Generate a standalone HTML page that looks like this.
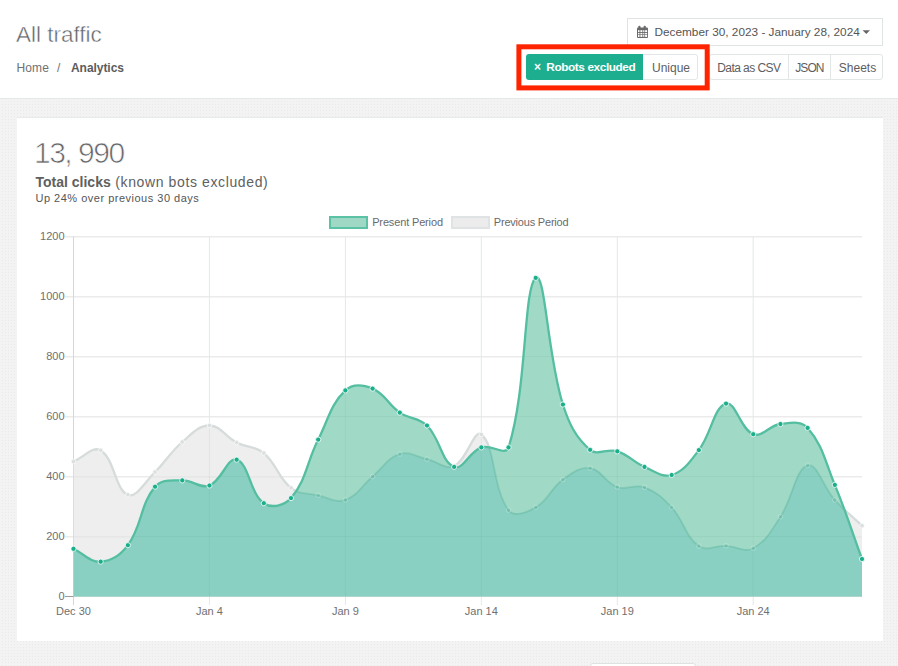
<!DOCTYPE html>
<html><head><meta charset="utf-8">
<style>
*{box-sizing:border-box;margin:0;padding:0}
html,body{width:898px;height:666px;overflow:hidden;background:#fff;font-family:"Liberation Sans",sans-serif;position:relative}
.hline{position:absolute;left:0;top:98px;width:898px;height:1px;background:#e4e7e7}
.bg{position:absolute;left:0;top:99px;width:898px;height:567px;background-color:#f3f3f3;background-image:linear-gradient(#f3f3f3 2px,transparent 2px),linear-gradient(90deg,#f3f3f3 2px,#eaeaea 2px);background-size:3px 3px}
.card{position:absolute;left:17px;top:117px;width:866px;height:524px;background:#fff;border-top:1px solid #e8ebeb}
.t{position:absolute;white-space:nowrap;line-height:1}
.title{left:16px;top:23.5px;font-size:22.5px;color:#606366;-webkit-text-stroke:0.45px #fff}
.date{position:absolute;left:627px;top:18px;width:256px;height:28px;border:1px solid #dfe3e3;background:#fff}
.btn{position:absolute;top:54px;height:26px;border:1px solid #e2e6e6;background:#fff}
.red{position:absolute;left:516.5px;top:44.3px;width:193.2px;height:46px;border:5px solid #fa2200}
.green{position:absolute;left:526px;top:54px;width:117px;height:26px;background:#1cae8f;border-radius:3px 0 0 3px}
.sep{position:absolute;top:55px;width:1px;height:24px;background:#e2e6e6}
.bt{font-size:12px;color:#5e5e5e;top:61.5px}
</style></head><body>
<div class="hline"></div>
<div class="bg"></div>
<div class="t title">All traffic</div>
<div class="t" style="left:16.5px;top:61.5px;font-size:12px;color:#707070;letter-spacing:0.1px">Home</div>
<div class="t" style="left:57px;top:61.5px;font-size:12px;color:#707070">/</div>
<div class="t" style="left:71px;top:61.5px;font-size:12px;color:#5c5c5c;font-weight:bold;letter-spacing:-0.05px">Analytics</div>
<div class="date"></div>
<svg style="position:absolute;left:0;top:0" width="898" height="100">
<rect x="637" y="27.5" width="11" height="10.5" rx="1" fill="#6a6a6a"/>
<rect x="638.3" y="25.8" width="2.2" height="3" rx="1" fill="#6a6a6a"/>
<rect x="643.6" y="25.8" width="2.2" height="3" rx="1" fill="#6a6a6a"/>
<g fill="#fff">
<rect x="638" y="30.2" width="1.5" height="1.8"/><rect x="640.4" y="30.2" width="2" height="1.8"/><rect x="643.2" y="30.2" width="1.2" height="1.8"/><rect x="645.1" y="30.2" width="2" height="1.8"/>
<rect x="638" y="32.9" width="1.5" height="1.4"/><rect x="640.4" y="32.9" width="2" height="1.4"/><rect x="643.2" y="32.9" width="1.2" height="1.4"/><rect x="645.1" y="32.9" width="2" height="1.4"/>
<rect x="638" y="34.9" width="1.5" height="2"/><rect x="640.4" y="34.9" width="2" height="2"/><rect x="643.2" y="34.9" width="1.2" height="2"/><rect x="645.1" y="34.9" width="2" height="2"/>
</g>
<path d="M862.6 30.3 L870 30.3 L866.3 34 Z" fill="#666"/>
</svg>
<div class="t" style="left:654.5px;top:26.5px;font-size:11.8px;color:#555">December 30, 2023 - January 28, 2024</div>
<div class="btn" style="left:642px;width:56px;border-radius:0 3px 3px 0"></div>
<div class="t bt" style="left:652px;">Unique</div>
<div class="green"></div>
<div class="t" style="left:534px;top:61px;font-size:12px;font-weight:bold;color:#f4fbf9">×</div>
<div class="t" style="left:546.3px;top:62px;font-size:11.8px;color:#fff;font-weight:bold;letter-spacing:-0.4px">Robots excluded</div>
<div class="btn" style="left:709px;width:174px;border-radius:3px"></div>
<div class="sep" style="left:788px"></div>
<div class="sep" style="left:830px"></div>
<div class="t bt" style="left:717.2px;letter-spacing:-0.55px">Data as CSV</div>
<div class="t bt" style="left:795.2px;letter-spacing:-0.9px">JSON</div>
<div class="t bt" style="left:838.8px">Sheets</div>
<svg style="position:absolute;left:0;top:0" width="898" height="100"><rect x="518.9" y="46.8" width="188.3" height="41.1" fill="none" stroke="#fe2400" stroke-width="5"/></svg>
<div class="card"></div>
<div style="position:absolute;left:590px;top:663px;width:106px;height:10px;background:#fff;border:1px solid #dde3e3;border-radius:3px"></div>
<div class="t" style="left:34px;top:138px;font-size:30px;color:#65676a;letter-spacing:-1.5px;-webkit-text-stroke:0.7px #fff">13, 990</div>
<div class="t" style="left:35.5px;top:174.5px;font-size:14px;color:#606060;letter-spacing:0.62px"><b style="letter-spacing:0">Total clicks</b> (known bots excluded)</div>
<div class="t" style="left:35.5px;top:193.3px;font-size:11px;color:#555;letter-spacing:0.5px">Up 24% over previous 30 days</div>
<div class="t" style="left:372.2px;top:217px;font-size:11px;color:#6a6a6a;letter-spacing:-0.15px">Present Period</div>
<div class="t" style="left:493.8px;top:217px;font-size:11px;color:#6a6a6a;letter-spacing:-0.2px">Previous Period</div>
<div style="position:absolute;left:329px;top:215.6px;width:39px;height:13.4px;background:#9fd9c6;border:2.5px solid #5cc2a6"></div>
<div style="position:absolute;left:450.6px;top:215.6px;width:39px;height:13.6px;background:#ececec;border:2.5px solid #dfe3e3"></div>
<svg width="898" height="666" viewBox="0 0 898 666" style="position:absolute;left:0;top:0">
<defs><clipPath id="cv"><path d="M73.50 461.50 C84.38 457.06 92.84 445.60 100.69 450.40 C114.60 458.92 114.94 489.66 127.88 494.80 C136.70 498.30 144.91 481.86 155.07 472.00 C166.66 460.74 170.08 452.42 182.26 442.00 C191.83 433.82 198.63 425.38 209.45 425.50 C220.38 425.62 225.23 436.81 236.64 442.60 C246.99 447.85 255.18 445.90 263.83 453.10 C276.93 464.02 277.74 477.57 291.02 487.90 C299.49 494.49 307.21 492.97 318.21 495.40 C328.96 497.77 335.95 503.18 345.40 499.90 C357.70 495.62 361.62 485.75 372.59 476.50 C383.37 467.39 387.58 457.90 399.78 454.00 C409.33 450.94 416.17 456.72 426.97 459.10 C437.92 461.52 445.40 469.96 454.16 466.00 C467.15 460.12 473.92 428.48 481.34 434.50 C495.67 446.12 492.30 488.34 508.53 510.10 C514.05 517.50 526.76 512.45 535.72 507.40 C548.51 500.21 550.53 488.45 562.91 479.50 C572.28 472.73 579.86 466.69 590.10 468.10 C601.61 469.69 605.35 482.78 617.29 487.00 C627.10 490.46 634.79 483.66 644.48 487.30 C656.54 491.82 662.60 497.60 671.67 507.40 C684.36 521.12 685.05 536.35 698.86 546.10 C706.80 551.71 715.20 545.38 726.05 545.80 C736.95 546.22 744.63 552.81 753.24 548.20 C766.38 541.17 771.35 530.53 780.43 516.70 C793.10 497.41 795.24 469.23 807.62 465.40 C816.99 462.51 823.07 486.89 834.81 499.90 C844.83 511.01 851.12 515.38 862.00 525.70 L862.00 596.50 L73.50 596.50 Z"/></clipPath><clipPath id="cp"><path d="M73.50 548.80 C84.38 553.96 90.11 562.40 100.69 561.70 C111.87 560.96 120.70 555.11 127.88 545.20 C142.45 525.11 139.89 504.79 155.07 486.70 C161.64 478.87 171.33 480.64 182.26 480.40 C193.09 480.16 200.21 489.02 209.45 485.50 C221.96 480.74 227.45 456.71 236.64 459.70 C249.21 463.79 249.70 493.22 263.83 503.20 C271.45 508.58 284.49 505.74 291.02 498.10 C306.24 480.30 306.58 462.62 318.21 439.60 C328.34 419.54 330.75 404.14 345.40 390.40 C352.50 383.74 363.25 384.79 372.59 388.60 C385.01 393.67 387.89 404.53 399.78 412.60 C409.64 419.29 418.74 417.29 426.97 425.50 C440.50 439.01 441.17 461.67 454.16 466.90 C462.92 470.43 469.34 451.70 481.34 447.40 C491.10 443.90 505.56 456.67 508.53 447.40 C527.31 388.87 523.32 287.68 535.72 277.90 C545.08 270.52 547.47 355.67 562.91 404.50 C569.22 424.43 575.75 437.45 590.10 449.80 C597.50 456.17 607.18 448.12 617.29 451.30 C628.93 454.96 633.06 461.92 644.48 466.90 C654.82 471.40 662.21 477.92 671.67 475.00 C683.96 471.20 690.02 461.70 698.86 450.10 C711.78 433.14 713.69 407.21 726.05 403.60 C735.44 400.85 740.52 429.43 753.24 434.20 C762.27 437.59 769.25 425.30 780.43 424.00 C791.00 422.78 801.03 420.52 807.62 427.90 C822.78 444.88 825.14 461.59 834.81 484.90 C846.89 514.03 851.12 529.36 862.00 559.00 L862.00 596.50 L73.50 596.50 Z"/></clipPath></defs>
<line x1="65" y1="536.8" x2="862.0" y2="536.8" stroke="#ebebeb" stroke-width="1.4"/>
<line x1="65" y1="476.8" x2="862.0" y2="476.8" stroke="#ebebeb" stroke-width="1.4"/>
<line x1="65" y1="416.8" x2="862.0" y2="416.8" stroke="#ebebeb" stroke-width="1.4"/>
<line x1="65" y1="356.8" x2="862.0" y2="356.8" stroke="#ebebeb" stroke-width="1.4"/>
<line x1="65" y1="296.8" x2="862.0" y2="296.8" stroke="#ebebeb" stroke-width="1.4"/>
<line x1="65" y1="236.8" x2="862.0" y2="236.8" stroke="#ebebeb" stroke-width="1.4"/>
<line x1="73.5" y1="236.5" x2="73.5" y2="605" stroke="#e3e8e8" stroke-width="1"/>
<line x1="209.4" y1="236.5" x2="209.4" y2="605" stroke="#e3e8e8" stroke-width="1"/>
<line x1="345.4" y1="236.5" x2="345.4" y2="605" stroke="#e3e8e8" stroke-width="1"/>
<line x1="481.3" y1="236.5" x2="481.3" y2="605" stroke="#e3e8e8" stroke-width="1"/>
<line x1="617.3" y1="236.5" x2="617.3" y2="605" stroke="#e3e8e8" stroke-width="1"/>
<line x1="753.2" y1="236.5" x2="753.2" y2="605" stroke="#e3e8e8" stroke-width="1"/>
<line x1="73.5" y1="596.5" x2="862.0" y2="596.5" stroke="#bdbdbd" stroke-width="1"/>
<line x1="73.5" y1="236.5" x2="73.5" y2="605" stroke="#cddad7" stroke-width="1"/>
<path d="M73.50 461.50 C84.38 457.06 92.84 445.60 100.69 450.40 C114.60 458.92 114.94 489.66 127.88 494.80 C136.70 498.30 144.91 481.86 155.07 472.00 C166.66 460.74 170.08 452.42 182.26 442.00 C191.83 433.82 198.63 425.38 209.45 425.50 C220.38 425.62 225.23 436.81 236.64 442.60 C246.99 447.85 255.18 445.90 263.83 453.10 C276.93 464.02 277.74 477.57 291.02 487.90 C299.49 494.49 307.21 492.97 318.21 495.40 C328.96 497.77 335.95 503.18 345.40 499.90 C357.70 495.62 361.62 485.75 372.59 476.50 C383.37 467.39 387.58 457.90 399.78 454.00 C409.33 450.94 416.17 456.72 426.97 459.10 C437.92 461.52 445.40 469.96 454.16 466.00 C467.15 460.12 473.92 428.48 481.34 434.50 C495.67 446.12 492.30 488.34 508.53 510.10 C514.05 517.50 526.76 512.45 535.72 507.40 C548.51 500.21 550.53 488.45 562.91 479.50 C572.28 472.73 579.86 466.69 590.10 468.10 C601.61 469.69 605.35 482.78 617.29 487.00 C627.10 490.46 634.79 483.66 644.48 487.30 C656.54 491.82 662.60 497.60 671.67 507.40 C684.36 521.12 685.05 536.35 698.86 546.10 C706.80 551.71 715.20 545.38 726.05 545.80 C736.95 546.22 744.63 552.81 753.24 548.20 C766.38 541.17 771.35 530.53 780.43 516.70 C793.10 497.41 795.24 469.23 807.62 465.40 C816.99 462.51 823.07 486.89 834.81 499.90 C844.83 511.01 851.12 515.38 862.00 525.70 L862.00 596.50 L73.50 596.50 Z" fill="#eeeeee"/>
<g clip-path="url(#cv)">
<line x1="73.5" y1="536.8" x2="862.0" y2="536.8" stroke="rgba(0,0,0,0.04)" stroke-width="1.3"/>
<line x1="73.5" y1="476.8" x2="862.0" y2="476.8" stroke="rgba(0,0,0,0.04)" stroke-width="1.3"/>
<line x1="73.5" y1="416.8" x2="862.0" y2="416.8" stroke="rgba(0,0,0,0.04)" stroke-width="1.3"/>
<line x1="73.5" y1="356.8" x2="862.0" y2="356.8" stroke="rgba(0,0,0,0.04)" stroke-width="1.3"/>
<line x1="73.5" y1="296.8" x2="862.0" y2="296.8" stroke="rgba(0,0,0,0.04)" stroke-width="1.3"/>
<line x1="73.5" y1="236.8" x2="862.0" y2="236.8" stroke="rgba(0,0,0,0.04)" stroke-width="1.3"/>
<line x1="73.5" y1="236.5" x2="73.5" y2="596.5" stroke="rgba(0,30,30,0.05)" stroke-width="1"/>
<line x1="209.4" y1="236.5" x2="209.4" y2="596.5" stroke="rgba(0,30,30,0.05)" stroke-width="1"/>
<line x1="345.4" y1="236.5" x2="345.4" y2="596.5" stroke="rgba(0,30,30,0.05)" stroke-width="1"/>
<line x1="481.3" y1="236.5" x2="481.3" y2="596.5" stroke="rgba(0,30,30,0.05)" stroke-width="1"/>
<line x1="617.3" y1="236.5" x2="617.3" y2="596.5" stroke="rgba(0,30,30,0.05)" stroke-width="1"/>
<line x1="753.2" y1="236.5" x2="753.2" y2="596.5" stroke="rgba(0,30,30,0.05)" stroke-width="1"/>
</g>
<path d="M73.50 461.50 C84.38 457.06 92.84 445.60 100.69 450.40 C114.60 458.92 114.94 489.66 127.88 494.80 C136.70 498.30 144.91 481.86 155.07 472.00 C166.66 460.74 170.08 452.42 182.26 442.00 C191.83 433.82 198.63 425.38 209.45 425.50 C220.38 425.62 225.23 436.81 236.64 442.60 C246.99 447.85 255.18 445.90 263.83 453.10 C276.93 464.02 277.74 477.57 291.02 487.90 C299.49 494.49 307.21 492.97 318.21 495.40 C328.96 497.77 335.95 503.18 345.40 499.90 C357.70 495.62 361.62 485.75 372.59 476.50 C383.37 467.39 387.58 457.90 399.78 454.00 C409.33 450.94 416.17 456.72 426.97 459.10 C437.92 461.52 445.40 469.96 454.16 466.00 C467.15 460.12 473.92 428.48 481.34 434.50 C495.67 446.12 492.30 488.34 508.53 510.10 C514.05 517.50 526.76 512.45 535.72 507.40 C548.51 500.21 550.53 488.45 562.91 479.50 C572.28 472.73 579.86 466.69 590.10 468.10 C601.61 469.69 605.35 482.78 617.29 487.00 C627.10 490.46 634.79 483.66 644.48 487.30 C656.54 491.82 662.60 497.60 671.67 507.40 C684.36 521.12 685.05 536.35 698.86 546.10 C706.80 551.71 715.20 545.38 726.05 545.80 C736.95 546.22 744.63 552.81 753.24 548.20 C766.38 541.17 771.35 530.53 780.43 516.70 C793.10 497.41 795.24 469.23 807.62 465.40 C816.99 462.51 823.07 486.89 834.81 499.90 C844.83 511.01 851.12 515.38 862.00 525.70" fill="none" stroke="#d6dbdb" stroke-width="2.3"/>
<circle cx="73.50" cy="461.50" r="2.3" fill="#dcdfdf" stroke="#fafafa" stroke-width="0.8"/>
<circle cx="100.69" cy="450.40" r="2.3" fill="#dcdfdf" stroke="#fafafa" stroke-width="0.8"/>
<circle cx="127.88" cy="494.80" r="2.3" fill="#dcdfdf" stroke="#fafafa" stroke-width="0.8"/>
<circle cx="155.07" cy="472.00" r="2.3" fill="#dcdfdf" stroke="#fafafa" stroke-width="0.8"/>
<circle cx="182.26" cy="442.00" r="2.3" fill="#dcdfdf" stroke="#fafafa" stroke-width="0.8"/>
<circle cx="209.45" cy="425.50" r="2.3" fill="#dcdfdf" stroke="#fafafa" stroke-width="0.8"/>
<circle cx="236.64" cy="442.60" r="2.3" fill="#dcdfdf" stroke="#fafafa" stroke-width="0.8"/>
<circle cx="263.83" cy="453.10" r="2.3" fill="#dcdfdf" stroke="#fafafa" stroke-width="0.8"/>
<circle cx="291.02" cy="487.90" r="2.3" fill="#dcdfdf" stroke="#fafafa" stroke-width="0.8"/>
<circle cx="318.21" cy="495.40" r="2.3" fill="#dcdfdf" stroke="#fafafa" stroke-width="0.8"/>
<circle cx="345.40" cy="499.90" r="2.3" fill="#dcdfdf" stroke="#fafafa" stroke-width="0.8"/>
<circle cx="372.59" cy="476.50" r="2.3" fill="#dcdfdf" stroke="#fafafa" stroke-width="0.8"/>
<circle cx="399.78" cy="454.00" r="2.3" fill="#dcdfdf" stroke="#fafafa" stroke-width="0.8"/>
<circle cx="426.97" cy="459.10" r="2.3" fill="#dcdfdf" stroke="#fafafa" stroke-width="0.8"/>
<circle cx="454.16" cy="466.00" r="2.3" fill="#dcdfdf" stroke="#fafafa" stroke-width="0.8"/>
<circle cx="481.34" cy="434.50" r="2.3" fill="#dcdfdf" stroke="#fafafa" stroke-width="0.8"/>
<circle cx="508.53" cy="510.10" r="2.3" fill="#dcdfdf" stroke="#fafafa" stroke-width="0.8"/>
<circle cx="535.72" cy="507.40" r="2.3" fill="#dcdfdf" stroke="#fafafa" stroke-width="0.8"/>
<circle cx="562.91" cy="479.50" r="2.3" fill="#dcdfdf" stroke="#fafafa" stroke-width="0.8"/>
<circle cx="590.10" cy="468.10" r="2.3" fill="#dcdfdf" stroke="#fafafa" stroke-width="0.8"/>
<circle cx="617.29" cy="487.00" r="2.3" fill="#dcdfdf" stroke="#fafafa" stroke-width="0.8"/>
<circle cx="644.48" cy="487.30" r="2.3" fill="#dcdfdf" stroke="#fafafa" stroke-width="0.8"/>
<circle cx="671.67" cy="507.40" r="2.3" fill="#dcdfdf" stroke="#fafafa" stroke-width="0.8"/>
<circle cx="698.86" cy="546.10" r="2.3" fill="#dcdfdf" stroke="#fafafa" stroke-width="0.8"/>
<circle cx="726.05" cy="545.80" r="2.3" fill="#dcdfdf" stroke="#fafafa" stroke-width="0.8"/>
<circle cx="753.24" cy="548.20" r="2.3" fill="#dcdfdf" stroke="#fafafa" stroke-width="0.8"/>
<circle cx="780.43" cy="516.70" r="2.3" fill="#dcdfdf" stroke="#fafafa" stroke-width="0.8"/>
<circle cx="807.62" cy="465.40" r="2.3" fill="#dcdfdf" stroke="#fafafa" stroke-width="0.8"/>
<circle cx="834.81" cy="499.90" r="2.3" fill="#dcdfdf" stroke="#fafafa" stroke-width="0.8"/>
<circle cx="862.00" cy="525.70" r="2.3" fill="#dcdfdf" stroke="#fafafa" stroke-width="0.8"/>
<path d="M73.50 548.80 C84.38 553.96 90.11 562.40 100.69 561.70 C111.87 560.96 120.70 555.11 127.88 545.20 C142.45 525.11 139.89 504.79 155.07 486.70 C161.64 478.87 171.33 480.64 182.26 480.40 C193.09 480.16 200.21 489.02 209.45 485.50 C221.96 480.74 227.45 456.71 236.64 459.70 C249.21 463.79 249.70 493.22 263.83 503.20 C271.45 508.58 284.49 505.74 291.02 498.10 C306.24 480.30 306.58 462.62 318.21 439.60 C328.34 419.54 330.75 404.14 345.40 390.40 C352.50 383.74 363.25 384.79 372.59 388.60 C385.01 393.67 387.89 404.53 399.78 412.60 C409.64 419.29 418.74 417.29 426.97 425.50 C440.50 439.01 441.17 461.67 454.16 466.90 C462.92 470.43 469.34 451.70 481.34 447.40 C491.10 443.90 505.56 456.67 508.53 447.40 C527.31 388.87 523.32 287.68 535.72 277.90 C545.08 270.52 547.47 355.67 562.91 404.50 C569.22 424.43 575.75 437.45 590.10 449.80 C597.50 456.17 607.18 448.12 617.29 451.30 C628.93 454.96 633.06 461.92 644.48 466.90 C654.82 471.40 662.21 477.92 671.67 475.00 C683.96 471.20 690.02 461.70 698.86 450.10 C711.78 433.14 713.69 407.21 726.05 403.60 C735.44 400.85 740.52 429.43 753.24 434.20 C762.27 437.59 769.25 425.30 780.43 424.00 C791.00 422.78 801.03 420.52 807.62 427.90 C822.78 444.88 825.14 461.59 834.81 484.90 C846.89 514.03 851.12 529.36 862.00 559.00 L862.00 596.50 L73.50 596.50 Z" fill="rgb(160,218,199)"/>
<path d="M73.50 548.80 C84.38 553.96 90.11 562.40 100.69 561.70 C111.87 560.96 120.70 555.11 127.88 545.20 C142.45 525.11 139.89 504.79 155.07 486.70 C161.64 478.87 171.33 480.64 182.26 480.40 C193.09 480.16 200.21 489.02 209.45 485.50 C221.96 480.74 227.45 456.71 236.64 459.70 C249.21 463.79 249.70 493.22 263.83 503.20 C271.45 508.58 284.49 505.74 291.02 498.10 C306.24 480.30 306.58 462.62 318.21 439.60 C328.34 419.54 330.75 404.14 345.40 390.40 C352.50 383.74 363.25 384.79 372.59 388.60 C385.01 393.67 387.89 404.53 399.78 412.60 C409.64 419.29 418.74 417.29 426.97 425.50 C440.50 439.01 441.17 461.67 454.16 466.90 C462.92 470.43 469.34 451.70 481.34 447.40 C491.10 443.90 505.56 456.67 508.53 447.40 C527.31 388.87 523.32 287.68 535.72 277.90 C545.08 270.52 547.47 355.67 562.91 404.50 C569.22 424.43 575.75 437.45 590.10 449.80 C597.50 456.17 607.18 448.12 617.29 451.30 C628.93 454.96 633.06 461.92 644.48 466.90 C654.82 471.40 662.21 477.92 671.67 475.00 C683.96 471.20 690.02 461.70 698.86 450.10 C711.78 433.14 713.69 407.21 726.05 403.60 C735.44 400.85 740.52 429.43 753.24 434.20 C762.27 437.59 769.25 425.30 780.43 424.00 C791.00 422.78 801.03 420.52 807.62 427.90 C822.78 444.88 825.14 461.59 834.81 484.90 C846.89 514.03 851.12 529.36 862.00 559.00 L862.00 596.50 L73.50 596.50 Z" fill="rgb(137,208,194)" clip-path="url(#cv)"/>
<g clip-path="url(#cp)">
<line x1="73.5" y1="536.5" x2="862.0" y2="536.5" stroke="rgba(0,60,40,0.045)" stroke-width="1"/>
<line x1="73.5" y1="476.5" x2="862.0" y2="476.5" stroke="rgba(0,60,40,0.045)" stroke-width="1"/>
<line x1="73.5" y1="416.5" x2="862.0" y2="416.5" stroke="rgba(0,60,40,0.045)" stroke-width="1"/>
<line x1="73.5" y1="356.5" x2="862.0" y2="356.5" stroke="rgba(0,60,40,0.045)" stroke-width="1"/>
<line x1="73.5" y1="296.5" x2="862.0" y2="296.5" stroke="rgba(0,60,40,0.045)" stroke-width="1"/>
<line x1="73.5" y1="236.5" x2="862.0" y2="236.5" stroke="rgba(0,60,40,0.045)" stroke-width="1"/>
<line x1="73.5" y1="236.5" x2="73.5" y2="596.5" stroke="rgba(0,60,40,0.045)" stroke-width="1"/>
<line x1="209.4" y1="236.5" x2="209.4" y2="596.5" stroke="rgba(0,60,40,0.045)" stroke-width="1"/>
<line x1="345.4" y1="236.5" x2="345.4" y2="596.5" stroke="rgba(0,60,40,0.045)" stroke-width="1"/>
<line x1="481.3" y1="236.5" x2="481.3" y2="596.5" stroke="rgba(0,60,40,0.045)" stroke-width="1"/>
<line x1="617.3" y1="236.5" x2="617.3" y2="596.5" stroke="rgba(0,60,40,0.045)" stroke-width="1"/>
<line x1="753.2" y1="236.5" x2="753.2" y2="596.5" stroke="rgba(0,60,40,0.045)" stroke-width="1"/>
<path d="M73.50 461.50 C84.38 457.06 92.84 445.60 100.69 450.40 C114.60 458.92 114.94 489.66 127.88 494.80 C136.70 498.30 144.91 481.86 155.07 472.00 C166.66 460.74 170.08 452.42 182.26 442.00 C191.83 433.82 198.63 425.38 209.45 425.50 C220.38 425.62 225.23 436.81 236.64 442.60 C246.99 447.85 255.18 445.90 263.83 453.10 C276.93 464.02 277.74 477.57 291.02 487.90 C299.49 494.49 307.21 492.97 318.21 495.40 C328.96 497.77 335.95 503.18 345.40 499.90 C357.70 495.62 361.62 485.75 372.59 476.50 C383.37 467.39 387.58 457.90 399.78 454.00 C409.33 450.94 416.17 456.72 426.97 459.10 C437.92 461.52 445.40 469.96 454.16 466.00 C467.15 460.12 473.92 428.48 481.34 434.50 C495.67 446.12 492.30 488.34 508.53 510.10 C514.05 517.50 526.76 512.45 535.72 507.40 C548.51 500.21 550.53 488.45 562.91 479.50 C572.28 472.73 579.86 466.69 590.10 468.10 C601.61 469.69 605.35 482.78 617.29 487.00 C627.10 490.46 634.79 483.66 644.48 487.30 C656.54 491.82 662.60 497.60 671.67 507.40 C684.36 521.12 685.05 536.35 698.86 546.10 C706.80 551.71 715.20 545.38 726.05 545.80 C736.95 546.22 744.63 552.81 753.24 548.20 C766.38 541.17 771.35 530.53 780.43 516.70 C793.10 497.41 795.24 469.23 807.62 465.40 C816.99 462.51 823.07 486.89 834.81 499.90 C844.83 511.01 851.12 515.38 862.00 525.70" fill="none" stroke="rgba(40,150,120,0.22)" stroke-width="1.8"/>
<circle cx="73.50" cy="461.50" r="2.3" fill="rgba(40,150,120,0.12)" stroke="rgba(255,255,255,0.35)" stroke-width="0.8"/>
<circle cx="100.69" cy="450.40" r="2.3" fill="rgba(40,150,120,0.12)" stroke="rgba(255,255,255,0.35)" stroke-width="0.8"/>
<circle cx="127.88" cy="494.80" r="2.3" fill="rgba(40,150,120,0.12)" stroke="rgba(255,255,255,0.35)" stroke-width="0.8"/>
<circle cx="155.07" cy="472.00" r="2.3" fill="rgba(40,150,120,0.12)" stroke="rgba(255,255,255,0.35)" stroke-width="0.8"/>
<circle cx="182.26" cy="442.00" r="2.3" fill="rgba(40,150,120,0.12)" stroke="rgba(255,255,255,0.35)" stroke-width="0.8"/>
<circle cx="209.45" cy="425.50" r="2.3" fill="rgba(40,150,120,0.12)" stroke="rgba(255,255,255,0.35)" stroke-width="0.8"/>
<circle cx="236.64" cy="442.60" r="2.3" fill="rgba(40,150,120,0.12)" stroke="rgba(255,255,255,0.35)" stroke-width="0.8"/>
<circle cx="263.83" cy="453.10" r="2.3" fill="rgba(40,150,120,0.12)" stroke="rgba(255,255,255,0.35)" stroke-width="0.8"/>
<circle cx="291.02" cy="487.90" r="2.3" fill="rgba(40,150,120,0.12)" stroke="rgba(255,255,255,0.35)" stroke-width="0.8"/>
<circle cx="318.21" cy="495.40" r="2.3" fill="rgba(40,150,120,0.12)" stroke="rgba(255,255,255,0.35)" stroke-width="0.8"/>
<circle cx="345.40" cy="499.90" r="2.3" fill="rgba(40,150,120,0.12)" stroke="rgba(255,255,255,0.35)" stroke-width="0.8"/>
<circle cx="372.59" cy="476.50" r="2.3" fill="rgba(40,150,120,0.12)" stroke="rgba(255,255,255,0.35)" stroke-width="0.8"/>
<circle cx="399.78" cy="454.00" r="2.3" fill="rgba(40,150,120,0.12)" stroke="rgba(255,255,255,0.35)" stroke-width="0.8"/>
<circle cx="426.97" cy="459.10" r="2.3" fill="rgba(40,150,120,0.12)" stroke="rgba(255,255,255,0.35)" stroke-width="0.8"/>
<circle cx="454.16" cy="466.00" r="2.3" fill="rgba(40,150,120,0.12)" stroke="rgba(255,255,255,0.35)" stroke-width="0.8"/>
<circle cx="481.34" cy="434.50" r="2.3" fill="rgba(40,150,120,0.12)" stroke="rgba(255,255,255,0.35)" stroke-width="0.8"/>
<circle cx="508.53" cy="510.10" r="2.3" fill="rgba(40,150,120,0.12)" stroke="rgba(255,255,255,0.35)" stroke-width="0.8"/>
<circle cx="535.72" cy="507.40" r="2.3" fill="rgba(40,150,120,0.12)" stroke="rgba(255,255,255,0.35)" stroke-width="0.8"/>
<circle cx="562.91" cy="479.50" r="2.3" fill="rgba(40,150,120,0.12)" stroke="rgba(255,255,255,0.35)" stroke-width="0.8"/>
<circle cx="590.10" cy="468.10" r="2.3" fill="rgba(40,150,120,0.12)" stroke="rgba(255,255,255,0.35)" stroke-width="0.8"/>
<circle cx="617.29" cy="487.00" r="2.3" fill="rgba(40,150,120,0.12)" stroke="rgba(255,255,255,0.35)" stroke-width="0.8"/>
<circle cx="644.48" cy="487.30" r="2.3" fill="rgba(40,150,120,0.12)" stroke="rgba(255,255,255,0.35)" stroke-width="0.8"/>
<circle cx="671.67" cy="507.40" r="2.3" fill="rgba(40,150,120,0.12)" stroke="rgba(255,255,255,0.35)" stroke-width="0.8"/>
<circle cx="698.86" cy="546.10" r="2.3" fill="rgba(40,150,120,0.12)" stroke="rgba(255,255,255,0.35)" stroke-width="0.8"/>
<circle cx="726.05" cy="545.80" r="2.3" fill="rgba(40,150,120,0.12)" stroke="rgba(255,255,255,0.35)" stroke-width="0.8"/>
<circle cx="753.24" cy="548.20" r="2.3" fill="rgba(40,150,120,0.12)" stroke="rgba(255,255,255,0.35)" stroke-width="0.8"/>
<circle cx="780.43" cy="516.70" r="2.3" fill="rgba(40,150,120,0.12)" stroke="rgba(255,255,255,0.35)" stroke-width="0.8"/>
<circle cx="807.62" cy="465.40" r="2.3" fill="rgba(40,150,120,0.12)" stroke="rgba(255,255,255,0.35)" stroke-width="0.8"/>
<circle cx="834.81" cy="499.90" r="2.3" fill="rgba(40,150,120,0.12)" stroke="rgba(255,255,255,0.35)" stroke-width="0.8"/>
<circle cx="862.00" cy="525.70" r="2.3" fill="rgba(40,150,120,0.12)" stroke="rgba(255,255,255,0.35)" stroke-width="0.8"/>
</g>
<path d="M73.50 548.80 C84.38 553.96 90.11 562.40 100.69 561.70 C111.87 560.96 120.70 555.11 127.88 545.20 C142.45 525.11 139.89 504.79 155.07 486.70 C161.64 478.87 171.33 480.64 182.26 480.40 C193.09 480.16 200.21 489.02 209.45 485.50 C221.96 480.74 227.45 456.71 236.64 459.70 C249.21 463.79 249.70 493.22 263.83 503.20 C271.45 508.58 284.49 505.74 291.02 498.10 C306.24 480.30 306.58 462.62 318.21 439.60 C328.34 419.54 330.75 404.14 345.40 390.40 C352.50 383.74 363.25 384.79 372.59 388.60 C385.01 393.67 387.89 404.53 399.78 412.60 C409.64 419.29 418.74 417.29 426.97 425.50 C440.50 439.01 441.17 461.67 454.16 466.90 C462.92 470.43 469.34 451.70 481.34 447.40 C491.10 443.90 505.56 456.67 508.53 447.40 C527.31 388.87 523.32 287.68 535.72 277.90 C545.08 270.52 547.47 355.67 562.91 404.50 C569.22 424.43 575.75 437.45 590.10 449.80 C597.50 456.17 607.18 448.12 617.29 451.30 C628.93 454.96 633.06 461.92 644.48 466.90 C654.82 471.40 662.21 477.92 671.67 475.00 C683.96 471.20 690.02 461.70 698.86 450.10 C711.78 433.14 713.69 407.21 726.05 403.60 C735.44 400.85 740.52 429.43 753.24 434.20 C762.27 437.59 769.25 425.30 780.43 424.00 C791.00 422.78 801.03 420.52 807.62 427.90 C822.78 444.88 825.14 461.59 834.81 484.90 C846.89 514.03 851.12 529.36 862.00 559.00" fill="none" stroke="rgb(84,190,160)" stroke-width="2.3"/>
<circle cx="73.50" cy="548.80" r="2.6" fill="#1aae8a" stroke="#fff" stroke-width="0.8"/>
<circle cx="100.69" cy="561.70" r="2.6" fill="#1aae8a" stroke="#fff" stroke-width="0.8"/>
<circle cx="127.88" cy="545.20" r="2.6" fill="#1aae8a" stroke="#fff" stroke-width="0.8"/>
<circle cx="155.07" cy="486.70" r="2.6" fill="#1aae8a" stroke="#fff" stroke-width="0.8"/>
<circle cx="182.26" cy="480.40" r="2.6" fill="#1aae8a" stroke="#fff" stroke-width="0.8"/>
<circle cx="209.45" cy="485.50" r="2.6" fill="#1aae8a" stroke="#fff" stroke-width="0.8"/>
<circle cx="236.64" cy="459.70" r="2.6" fill="#1aae8a" stroke="#fff" stroke-width="0.8"/>
<circle cx="263.83" cy="503.20" r="2.6" fill="#1aae8a" stroke="#fff" stroke-width="0.8"/>
<circle cx="291.02" cy="498.10" r="2.6" fill="#1aae8a" stroke="#fff" stroke-width="0.8"/>
<circle cx="318.21" cy="439.60" r="2.6" fill="#1aae8a" stroke="#fff" stroke-width="0.8"/>
<circle cx="345.40" cy="390.40" r="2.6" fill="#1aae8a" stroke="#fff" stroke-width="0.8"/>
<circle cx="372.59" cy="388.60" r="2.6" fill="#1aae8a" stroke="#fff" stroke-width="0.8"/>
<circle cx="399.78" cy="412.60" r="2.6" fill="#1aae8a" stroke="#fff" stroke-width="0.8"/>
<circle cx="426.97" cy="425.50" r="2.6" fill="#1aae8a" stroke="#fff" stroke-width="0.8"/>
<circle cx="454.16" cy="466.90" r="2.6" fill="#1aae8a" stroke="#fff" stroke-width="0.8"/>
<circle cx="481.34" cy="447.40" r="2.6" fill="#1aae8a" stroke="#fff" stroke-width="0.8"/>
<circle cx="508.53" cy="447.40" r="2.6" fill="#1aae8a" stroke="#fff" stroke-width="0.8"/>
<circle cx="535.72" cy="277.90" r="2.6" fill="#1aae8a" stroke="#fff" stroke-width="0.8"/>
<circle cx="562.91" cy="404.50" r="2.6" fill="#1aae8a" stroke="#fff" stroke-width="0.8"/>
<circle cx="590.10" cy="449.80" r="2.6" fill="#1aae8a" stroke="#fff" stroke-width="0.8"/>
<circle cx="617.29" cy="451.30" r="2.6" fill="#1aae8a" stroke="#fff" stroke-width="0.8"/>
<circle cx="644.48" cy="466.90" r="2.6" fill="#1aae8a" stroke="#fff" stroke-width="0.8"/>
<circle cx="671.67" cy="475.00" r="2.6" fill="#1aae8a" stroke="#fff" stroke-width="0.8"/>
<circle cx="698.86" cy="450.10" r="2.6" fill="#1aae8a" stroke="#fff" stroke-width="0.8"/>
<circle cx="726.05" cy="403.60" r="2.6" fill="#1aae8a" stroke="#fff" stroke-width="0.8"/>
<circle cx="753.24" cy="434.20" r="2.6" fill="#1aae8a" stroke="#fff" stroke-width="0.8"/>
<circle cx="780.43" cy="424.00" r="2.6" fill="#1aae8a" stroke="#fff" stroke-width="0.8"/>
<circle cx="807.62" cy="427.90" r="2.6" fill="#1aae8a" stroke="#fff" stroke-width="0.8"/>
<circle cx="834.81" cy="484.90" r="2.6" fill="#1aae8a" stroke="#fff" stroke-width="0.8"/>
<circle cx="862.00" cy="559.00" r="2.6" fill="#1aae8a" stroke="#fff" stroke-width="0.8"/>
<line x1="65" y1="596.5" x2="73.5" y2="596.5" stroke="#9a9a9a" stroke-width="1"/>
<text x="64.6" y="599.8" text-anchor="end" font-family="Liberation Sans" font-size="11" fill="#707070">0</text>
<text x="64.6" y="539.8" text-anchor="end" font-family="Liberation Sans" font-size="11" fill="#707070">200</text>
<text x="64.6" y="479.8" text-anchor="end" font-family="Liberation Sans" font-size="11" fill="#707070">400</text>
<text x="64.6" y="419.8" text-anchor="end" font-family="Liberation Sans" font-size="11" fill="#707070">600</text>
<text x="64.6" y="359.8" text-anchor="end" font-family="Liberation Sans" font-size="11" fill="#707070">800</text>
<text x="64.6" y="299.8" text-anchor="end" font-family="Liberation Sans" font-size="11" fill="#707070">1000</text>
<text x="64.6" y="239.8" text-anchor="end" font-family="Liberation Sans" font-size="11" fill="#707070">1200</text>
<text x="73.5" y="614.5" text-anchor="middle" font-family="Liberation Sans" font-size="11" fill="#707070">Dec 30</text>
<text x="209.4" y="614.5" text-anchor="middle" font-family="Liberation Sans" font-size="11" fill="#707070">Jan 4</text>
<text x="345.4" y="614.5" text-anchor="middle" font-family="Liberation Sans" font-size="11" fill="#707070">Jan 9</text>
<text x="481.3" y="614.5" text-anchor="middle" font-family="Liberation Sans" font-size="11" fill="#707070">Jan 14</text>
<text x="617.3" y="614.5" text-anchor="middle" font-family="Liberation Sans" font-size="11" fill="#707070">Jan 19</text>
<text x="753.2" y="614.5" text-anchor="middle" font-family="Liberation Sans" font-size="11" fill="#707070">Jan 24</text>
</svg>
</body></html>
